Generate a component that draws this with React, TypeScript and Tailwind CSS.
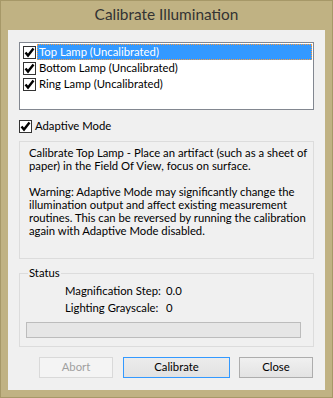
import React from "react";

const FONT = { fontFamily: 'Lato, "Liberation Sans", sans-serif' };

function Check({ checked = true }: { checked?: boolean }) {
  return (
    <span className="w-[13px] h-[13px] shrink-0 border border-[#333] bg-white flex items-center justify-center">
      {checked && (
        <svg width="11" height="11" viewBox="0 0 11 11">
          <path d="M1.5 5.5 L4 8.5 L9.5 1.5" fill="none" stroke="#000" strokeWidth="2.4" />
        </svg>
      )}
    </span>
  );
}

const LAMPS = [
  { label: "Top Lamp (Uncalibrated)", selected: true },
  { label: "Bottom Lamp (Uncalibrated)", selected: false },
  { label: "Ring Lamp (Uncalibrated)", selected: false },
];

const DESC = [
  "Calibrate Top Lamp - Place an artifact (such as a sheet of",
  "paper) in the Field Of View, focus on surface.",
  "",
  "Warning: Adaptive Mode may significantly change the",
  "illumination output and affect existing measurement",
  "routines. This can be reversed by running the calibration",
  "again with Adaptive Mode disabled.",
];

export default function App() {
  return (
    <div
      className="w-[333px] h-[398px] bg-[#c0b283] border border-[#a69868] flex flex-col text-[11.3px] text-black"
      style={FONT}
    >
      {/* Title bar */}
      <div className="h-[29px] flex items-center justify-center text-[15.4px] text-[#333] pb-[1px]">
        Calibrate Illumination
      </div>

      {/* Client area */}
      <div className="mx-[7px] h-[360px] bg-[#f0f0f0] px-[11px] pt-[12px] flex flex-col">
        {/* Lamp list */}
        <div className="h-[68px] border border-[#828790] bg-white p-[1px] flex flex-col">
          {LAMPS.map(({ label, selected }) => (
            <div key={label} className="h-[16px] flex items-center pl-[2px]">
              <Check />
              <span
                className={`ml-[1px] h-full flex-1 flex items-center pl-[1px] leading-none whitespace-nowrap ${
                  selected ? "bg-[#3399ff] text-white border border-dotted border-[#ff9c3a]" : "border border-transparent"
                }`}
              >
                {label}
              </span>
            </div>
          ))}
        </div>

        {/* Adaptive mode */}
        <div className="mt-[9px] h-[14px] flex items-center gap-[3px]">
          <Check />
          <span>Adaptive Mode</span>
        </div>

        {/* Description */}
        <div className="mt-[8px] h-[118px] border border-[#dcdcdc] pl-[9px] pt-[4px] leading-[13px]">
          {DESC.map((line, i) => (
            <div key={i} className="h-[13px] whitespace-nowrap">
              {line}
            </div>
          ))}
        </div>

        {/* Status group */}
        <fieldset className="mt-[6px] h-[82px] border border-[#dcdcdc] pl-[6px] pr-[12px]">
          <legend className="ml-[2px] px-[1px] leading-[16px]">Status</legend>
          <div className="grid grid-cols-[101px_auto] pl-[39px] leading-[17px] mt-[1px] whitespace-nowrap">
            <span>Magnification Step:</span>
            <span>0.0</span>
            <span>Lighting Grayscale:</span>
            <span>0</span>
          </div>
          <div className="mt-[6px] h-[16px] border border-[#bcbcbc] bg-[#e6e6e6]" />
        </fieldset>

        {/* Buttons */}
        <div className="mt-[10px] flex justify-end gap-[9px] pr-[1px]">
          <button className="w-[74px] h-[21px] border border-[#d9d9d9] bg-[#f4f4f4] text-[#a0a0a0]">Abort</button>
          <button className="w-[107px] h-[21px] border border-[#3399ff] bg-gradient-to-b from-[#ececec] to-[#e2e2e2] ml-[1px]">
            Calibrate
          </button>
          <button className="w-[74px] h-[21px] border border-[#adadad] bg-gradient-to-b from-[#f0f0f0] to-[#e3e3e3]">
            Close
          </button>
        </div>
      </div>
    </div>
  );
}
